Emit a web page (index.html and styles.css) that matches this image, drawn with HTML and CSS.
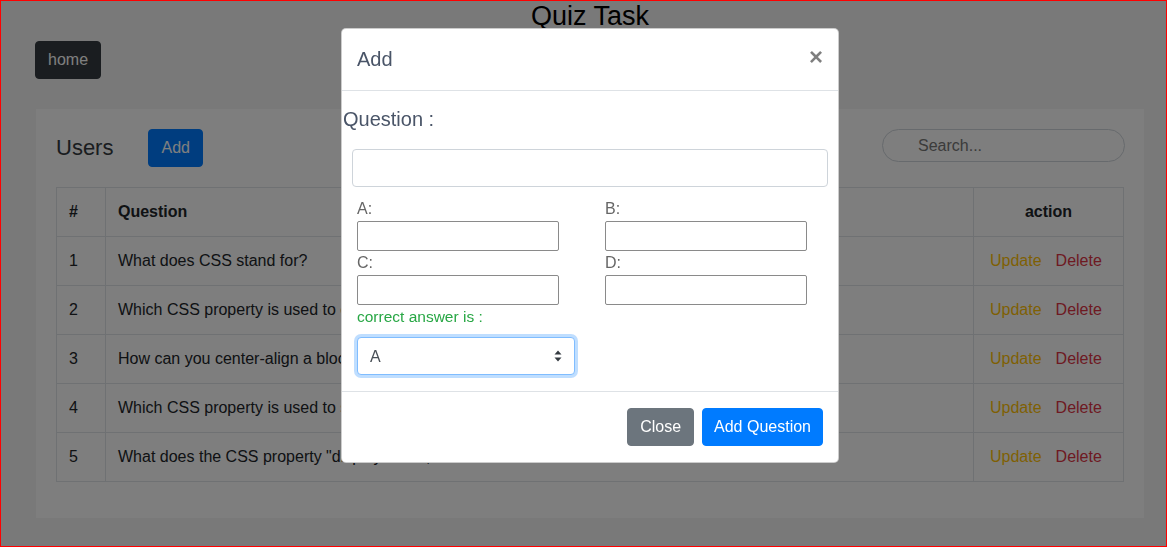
FILE: index.html
```html
<!DOCTYPE html>
<html lang="en">
<head>
<meta charset="utf-8">
<title>Quiz Task</title>
<link rel="stylesheet" href="styles.css">
</head>
<body>
  <div class="page">
    <h1 class="title">Quiz Task</h1>
    <div class="container">
      <button class="btn btn-dark">home</button>
      <div class="card">
        <div class="card-head">
          <h4 class="card-title">Users</h4>
          <button class="btn btn-primary">Add</button>
          <input class="search" type="text" placeholder="Search...">
        </div>
        <table class="table">
          <thead>
            <tr><th class="col-num">#</th><th>Question</th><th class="col-action">action</th></tr>
          </thead>
          <tbody>
            <tr><td>1</td><td>What does CSS stand for?</td><td class="actions"><span class="upd">Update</span><span class="del">Delete</span></td></tr>
            <tr><td>2</td><td>Which CSS property is used to change the text color?</td><td class="actions"><span class="upd">Update</span><span class="del">Delete</span></td></tr>
            <tr><td>3</td><td>How can you center-align a block element?</td><td class="actions"><span class="upd">Update</span><span class="del">Delete</span></td></tr>
            <tr><td>4</td><td>Which CSS property is used to set the font size?</td><td class="actions"><span class="upd">Update</span><span class="del">Delete</span></td></tr>
            <tr><td>5</td><td>What does the CSS property "display: none;" do?</td><td class="actions"><span class="upd">Update</span><span class="del">Delete</span></td></tr>
          </tbody>
        </table>
      </div>
    </div>
  </div>

  <div class="backdrop"></div>

  <div class="modal">
    <div class="modal-header">
      <h5 class="modal-title">Add</h5>
      <span class="close">&times;</span>
    </div>
    <div class="modal-body">
      <div class="q-label">Question :</div>
      <div class="q-wrap"><input class="form-control" type="text"></div>
      <div class="answers">
        <div class="field"><label>A:</label><input class="plain" type="text"></div>
        <div class="field"><label>B:</label><input class="plain" type="text"></div>
        <div class="field"><label>C:</label><input class="plain" type="text"></div>
        <div class="field"><label>D:</label><input class="plain" type="text"></div>
      </div>
      <div class="correct">correct answer is :</div>
      <div class="select-wrap">
        <select class="custom-select">
          <option>A</option><option>B</option><option>C</option><option>D</option>
        </select>
        <svg class="sel-arrows" width="8" height="12" viewBox="0 0 8 12"><path d="M4 0.5 L7.5 4.5 L0.5 4.5 Z M4 11.5 L7.5 7.5 L0.5 7.5 Z" fill="#343a40"/></svg>
      </div>
    </div>
    <div class="modal-footer">
      <button class="btn btn-secondary">Close</button>
      <button class="btn btn-primary btn-addq">Add Question</button>
    </div>
  </div>
</body>
</html>
```

FILE: styles.css
```css
* { box-sizing: border-box; }

html, body {
  margin: 0;
  overflow: hidden;
}

body {
  height: 547px;
  border: 1px solid #ff0000;
  background: #f2f2f2;
  font-family: "Liberation Sans", Arial, sans-serif;
  font-size: 16px;
  line-height: 1.5;
  color: #212529;
}

.page {
  width: 1178px;
}

.title {
  margin: 0;
  text-align: center;
  font-size: 27px;
  font-weight: normal;
  line-height: 30px;
  color: #000;
}

.container {
  width: 1140px;
  margin: 10px auto 0;
  padding: 0 15px;
}

.btn {
  display: inline-block;
  font-family: inherit;
  font-size: 16px;
  line-height: 24px;
  padding: 6px 12px;
  border: 1px solid transparent;
  border-radius: 4px;
  cursor: pointer;
}

.btn-dark {
  display: block;
  width: fit-content;
  background: #343a40;
  border-color: #343a40;
  color: #fff;
}
.btn-primary { background: #007bff; border-color: #007bff; color: #fff; }
.btn-secondary { background: #6c757d; border-color: #6c757d; color: #fff; }
.btn-addq { padding: 6px 11px; }

.card {
  margin-top: 29px;
  padding: 20px;
  background: #fcfcfc;
  border: 1px solid #f2f2f2;
}

.card-head {
  display: flex;
  align-items: center;
  height: 38px;
}

.card-title {
  margin: 0 35px 0 0;
  font-size: 22px;
  font-weight: normal;
  line-height: 1.2;
  color: #343a40;
}

.search {
  margin-left: auto;
  margin-right: -1px;
  width: 243px;
  height: 33px;
  border: 1px solid #ced4da;
  border-radius: 17px;
  padding: 0 12px 0 35px;
  font-family: inherit;
  font-size: 16px;
  background: transparent;
  align-self: flex-start;
}

.search::placeholder { color: #777; }

.table {
  width: 100%;
  margin: 20px 0 16px;
  border-collapse: collapse;
  border: 1px solid #dee2e6;
}

.table th, .table td {
  padding: 12px;
  border: 1px solid #dee2e6;
  text-align: left;
  vertical-align: top;
  line-height: 24px;
}

.table thead th {
  font-weight: bold;
}

.col-num { width: 49px; }
.col-action { width: 150px; text-align: center !important; }

.actions { padding-left: 16px !important; white-space: nowrap; }
.upd { color: #ffc107; margin-right: 14px; }
.del { color: #dc3545; }

.backdrop {
  position: fixed;
  inset: 1px;
  background: rgba(0, 0, 0, 0.5);
}

.modal {
  position: fixed;
  left: 341px;
  top: 28px;
  width: 498px;
  background: #fff;
  border: 1px solid rgba(0, 0, 0, 0.2);
  border-radius: 5px;
}

.modal-header {
  display: flex;
  align-items: flex-start;
  padding: 15px 15px 16px;
  border-bottom: 1px solid #dee2e6;
}

.modal-title {
  margin: 0;
  font-size: 20px;
  font-weight: normal;
  line-height: 30px;
  color: #4a5568;
}

.close {
  margin-left: auto;
  font-size: 24px;
  font-weight: bold;
  line-height: 24px;
  color: #000;
  opacity: 0.5;
  margin-top: 1px;
}

.modal-body {
  padding: 0 0 16px 0;
}

.q-label {
  margin: 13px 0 0 1px;
  font-size: 20px;
  line-height: 30px;
  color: #4a5568;
}

.q-wrap {
  padding: 15px 10px 0;
}

.form-control {
  display: block;
  width: 100%;
  height: 38px;
  border: 1px solid #ced4da;
  border-radius: 4px;
  padding: 6px 12px;
  font-family: inherit;
  font-size: 16px;
}

.answers {
  display: grid;
  grid-template-columns: 248px 248px;
  padding: 10px 0 0 15px;
}

.field label {
  display: block;
  line-height: 24px;
  color: #666;
}

.plain {
  display: block;
  width: 202px;
  height: 30px;
  border: 1px solid #8a8a8a;
  border-radius: 2px;
  font-family: inherit;
  font-size: 14px;
}

.correct {
  padding-left: 15px;
  font-size: 15.5px;
  line-height: 24px;
  color: #28a745;
}

.select-wrap {
  position: relative;
  width: 218px;
  margin: 8px 0 0 15px;
}

.custom-select {
  display: block;
  width: 218px;
  height: 38px;
  appearance: none;
  -webkit-appearance: none;
  border: 1px solid #80bdff;
  border-radius: 4px;
  box-shadow: 0 0 0 3px rgba(0, 123, 255, 0.25);
  padding: 6px 28px 6px 12px;
  font-family: inherit;
  font-size: 16px;
  color: #495057;
  background: #fff;
  outline: none;
}

.sel-arrows {
  position: absolute;
  right: 13px;
  top: 13px;
  pointer-events: none;
}

.modal-footer {
  display: flex;
  justify-content: flex-end;
  gap: 8px;
  padding: 16px 15px;
  border-top: 1px solid #dee2e6;
}
```
